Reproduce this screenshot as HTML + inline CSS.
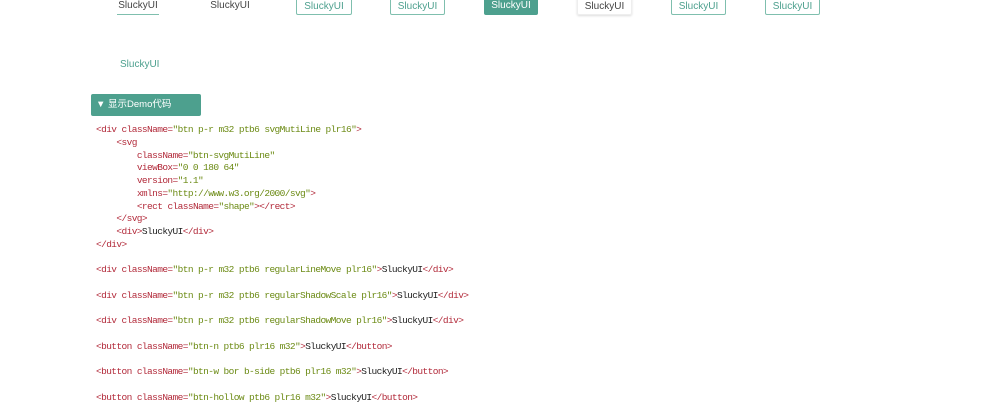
<!DOCTYPE html>
<html><head><meta charset="utf-8"><style>
body{margin:0;width:1000px;height:400px;overflow:hidden;background:#fff;font-family:"Liberation Sans","Noto Sans CJK SC",sans-serif;position:relative}
.b{position:absolute;top:-6px;height:21px;line-height:23px;font-size:10px;color:#444;text-align:center;box-sizing:border-box}
.o{border:1px solid #7fbfae;border-radius:2px;color:#4da08e}
.f{background:#4da08e;color:#fff;border-radius:2px}
.s{border:1px solid #eee;border-radius:2px;box-shadow:0 1px 2px #ddd}
.demo{position:absolute;left:91px;top:94px;width:110px;height:22px;background:#4da08e;color:#fff;font-size:9.5px;line-height:22px;padding-left:5px;box-sizing:border-box;border-radius:2px}
pre{position:absolute;left:96px;top:124px;margin:0;font-family:"Liberation Mono",monospace;font-size:9.5px;letter-spacing:-0.6px;line-height:12.75px;color:#222}
.t{color:#b22a3a}.v{color:#6b8a13}
</style></head><body>
<div class="b" style="left:117px;width:42px;border-bottom:1px solid #7fbfae">SluckyUI</div>
<div class="b" style="left:205px;width:50px">SluckyUI</div>
<div class="b o" style="left:296px;width:56px">SluckyUI</div>
<div class="b o" style="left:390px;width:55px">SluckyUI</div>
<div class="b f" style="left:484px;width:54px">SluckyUI</div>
<div class="b s" style="left:577px;width:55px">SluckyUI</div>
<div class="b o" style="left:671px;width:55px">SluckyUI</div>
<div class="b o" style="left:765px;width:55px">SluckyUI</div>
<div style="position:absolute;left:120px;top:59px;font-size:10px;color:#4da08e">SluckyUI</div>
<div class="demo">▼ 显示Demo代码</div>
<pre><span class="t">&lt;div</span> <span class="t">className=</span><span class="v">"btn p-r m32 ptb6 svgMutiLine plr16"</span><span class="t">&gt;</span>
    <span class="t">&lt;svg</span>
        <span class="t">className=</span><span class="v">"btn-svgMutiLine"</span>
        <span class="t">viewBox=</span><span class="v">"0 0 180 64"</span>
        <span class="t">version=</span><span class="v">"1.1"</span>
        <span class="t">xmlns=</span><span class="v">"http://www.w3.org/2000/svg"</span><span class="t">&gt;</span>
        <span class="t">&lt;rect</span> <span class="t">className=</span><span class="v">"shape"</span><span class="t">&gt;&lt;/rect&gt;</span>
    <span class="t">&lt;/svg&gt;</span>
    <span class="t">&lt;div&gt;</span>SluckyUI<span class="t">&lt;/div&gt;</span>
<span class="t">&lt;/div&gt;</span>

<span class="t">&lt;div</span> <span class="t">className=</span><span class="v">"btn p-r m32 ptb6 regularLineMove plr16"</span><span class="t">&gt;</span>SluckyUI<span class="t">&lt;/div&gt;</span>

<span class="t">&lt;div</span> <span class="t">className=</span><span class="v">"btn p-r m32 ptb6 regularShadowScale plr16"</span><span class="t">&gt;</span>SluckyUI<span class="t">&lt;/div&gt;</span>

<span class="t">&lt;div</span> <span class="t">className=</span><span class="v">"btn p-r m32 ptb6 regularShadowMove plr16"</span><span class="t">&gt;</span>SluckyUI<span class="t">&lt;/div&gt;</span>

<span class="t">&lt;button</span> <span class="t">className=</span><span class="v">"btn-n ptb6 plr16 m32"</span><span class="t">&gt;</span>SluckyUI<span class="t">&lt;/button&gt;</span>

<span class="t">&lt;button</span> <span class="t">className=</span><span class="v">"btn-w bor b-side ptb6 plr16 m32"</span><span class="t">&gt;</span>SluckyUI<span class="t">&lt;/button&gt;</span>

<span class="t">&lt;button</span> <span class="t">className=</span><span class="v">"btn-hollow ptb6 plr16 m32"</span><span class="t">&gt;</span>SluckyUI<span class="t">&lt;/button&gt;</span></pre>
</body></html>
